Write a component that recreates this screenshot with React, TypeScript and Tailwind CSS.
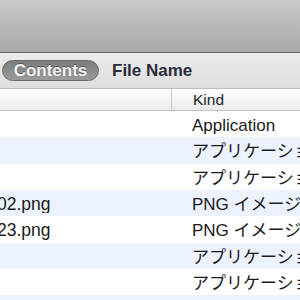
const rows = [
  { name: '', kind: 'Application' },
  { name: '', kind: 'アプリケーション' },
  { name: '', kind: 'アプリケーション' },
  { name: '02.png', kind: 'PNG イメージ' },
  { name: '23.png', kind: 'PNG イメージ' },
  { name: '', kind: 'アプリケーション' },
  { name: '', kind: 'アプリケーション' },
  { name: '', kind: 'アプリケーション' },
];

export default function App() {
  return (
    <div
      className="w-[300px] h-[300px] overflow-hidden bg-white"
      style={{ fontFamily: '"Liberation Sans", "Noto Sans CJK JP", sans-serif' }}
    >
      {/* toolbar */}
      <div className="h-[53px] bg-gradient-to-b from-[#c9c9c9] to-[#a9a9a9] border-b border-[#6d6d6d]" />

      {/* search scope bar */}
      <div className="h-[36px] flex items-center gap-[13px] pl-[2px] bg-gradient-to-b from-[#ebebeb] to-[#dedede] border-b border-[#bdbdbd]">
        <div className="h-[21px] w-[97px] rounded-full bg-gradient-to-b from-[#7c7c7c] to-[#9a9a9a] border border-[#6a6a6a] flex items-center justify-center">
          <span className="text-[17px] font-bold text-[#f2f2f2] leading-none [text-shadow:0_-1px_0_#555]">
            Contents
          </span>
        </div>
        <span className="text-[17px] font-bold text-[#2b2b3a] leading-none">File Name</span>
      </div>

      {/* column header */}
      <div className="h-[22px] flex bg-gradient-to-b from-[#ffffff] to-[#ebebeb] border-b border-[#c2c2c2]">
        <div className="w-[172px] shrink-0 border-r border-[#c6c6c6]" />
        <div className="pl-[21px] pt-[1px] flex items-center text-[15.5px] text-[#1e1e2a] leading-none">Kind</div>
      </div>

      {/* rows */}
      {rows.map((r, i) => (
        <div
          key={i}
          className={`h-[26.33px] flex items-center pt-[3px] text-[17.5px] text-[#1a1a1a] leading-none whitespace-nowrap ${
            i % 2 === 1 ? 'bg-[#edf3fe]' : 'bg-white'
          }`}
        >
          <div className="w-[173px] shrink-0 overflow-hidden">
            <span className="block ml-[-3px]">{r.name}</span>
          </div>
          <div className="pl-[19px] shrink-0 text-[17px]">{r.kind}</div>
        </div>
      ))}
    </div>
  );
}
